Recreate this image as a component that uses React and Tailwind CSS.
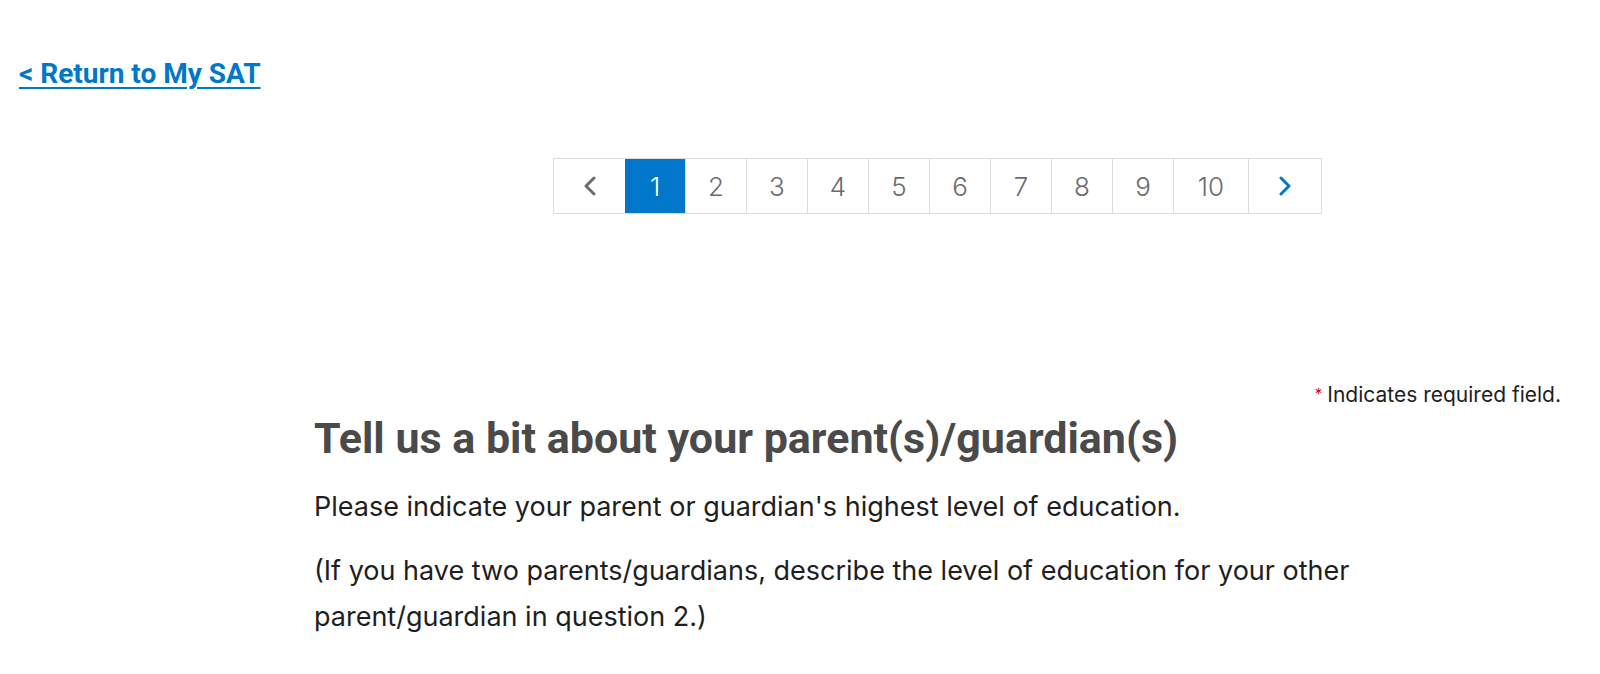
import React from 'react';

const pages = [1, 2, 3, 4, 5, 6, 7, 8, 9, 10];

function Chevron({ dir = 'left', className = '' }) {
  const pts = dir === 'left' ? '11,2 3,10 11,18' : '3,2 11,10 3,18';
  return (
    <svg width="14" height="20" viewBox="0 0 14 20" className={className}>
      <polyline points={pts} fill="none" stroke="currentColor" strokeWidth="3" strokeLinecap="round" strokeLinejoin="round" />
    </svg>
  );
}

function Pagination({ current = 1 }) {
  return (
    <nav className="flex border border-[#dcdcdc] bg-white" style={{ fontFamily: 'Inter, "Liberation Sans", sans-serif' }}>
      <button className="w-[72px] h-[54px] flex items-center justify-center text-[#6b6b6b] border-r border-[#dcdcdc]">
        <Chevron dir="left" />
      </button>
      {pages.map((p) => (
        <button
          key={p}
          className={`${p === 10 ? 'w-[75px]' : 'w-[61px]'} h-[54px] flex items-center justify-center text-[26px] font-light border-r border-[#dcdcdc] ${
            p === current ? 'bg-[#0077c8] text-white -ml-px w-[59px]' : 'text-[#6b6b6b]'
          }`}
        >
          {p}
        </button>
      ))}
      <button className="w-[72px] h-[54px] flex items-center justify-center text-[#0077c8]">
        <Chevron dir="right" />
      </button>
    </nav>
  );
}

export default function App() {
  return (
    <div className="min-h-screen bg-white">
      <div className="pt-[60px] pl-[19px] leading-[28px]">
        <a
          href="#"
          className="text-[28px] font-bold text-[#0077c8] underline underline-offset-[4px] decoration-[2px]"
          style={{ fontFamily: 'Roboto, "Liberation Sans", sans-serif' }}
        >
          &lt; Return to My SAT
        </a>
      </div>

      <div className="ml-[314px] w-[1247px]">
        <div className="flex justify-center mt-[67px]">
          <Pagination current={1} />
        </div>

        <p
          className="mt-[170px] text-right text-[21px] text-[#1e1e1e] leading-none"
          style={{ fontFamily: 'Inter, "Liberation Sans", sans-serif' }}
        >
          <sup className="text-[#d0021b] text-[15px] mr-[5px] relative -top-[3px]">*</sup>
          Indicates required field.
        </p>

        <h1
          className="mt-[8px] text-[43px] font-bold text-[#4a4a4a] leading-[1.2]"
          style={{ fontFamily: 'Roboto, "Liberation Sans", sans-serif' }}
        >
          Tell us a bit about your parent(s)/guardian(s)
        </h1>

        <div
          className="mt-[19px] w-[1060px] text-[27px] text-[#1e1e1e] leading-[46px]"
          style={{ fontFamily: 'Inter, "Liberation Sans", sans-serif' }}
        >
          <p>Please indicate your parent or guardian's highest level of education.</p>
          <p className="mt-[18px]">
            (If you have two parents/guardians, describe the level of education for your other parent/guardian in question 2.)
          </p>
        </div>
      </div>
    </div>
  );
}
